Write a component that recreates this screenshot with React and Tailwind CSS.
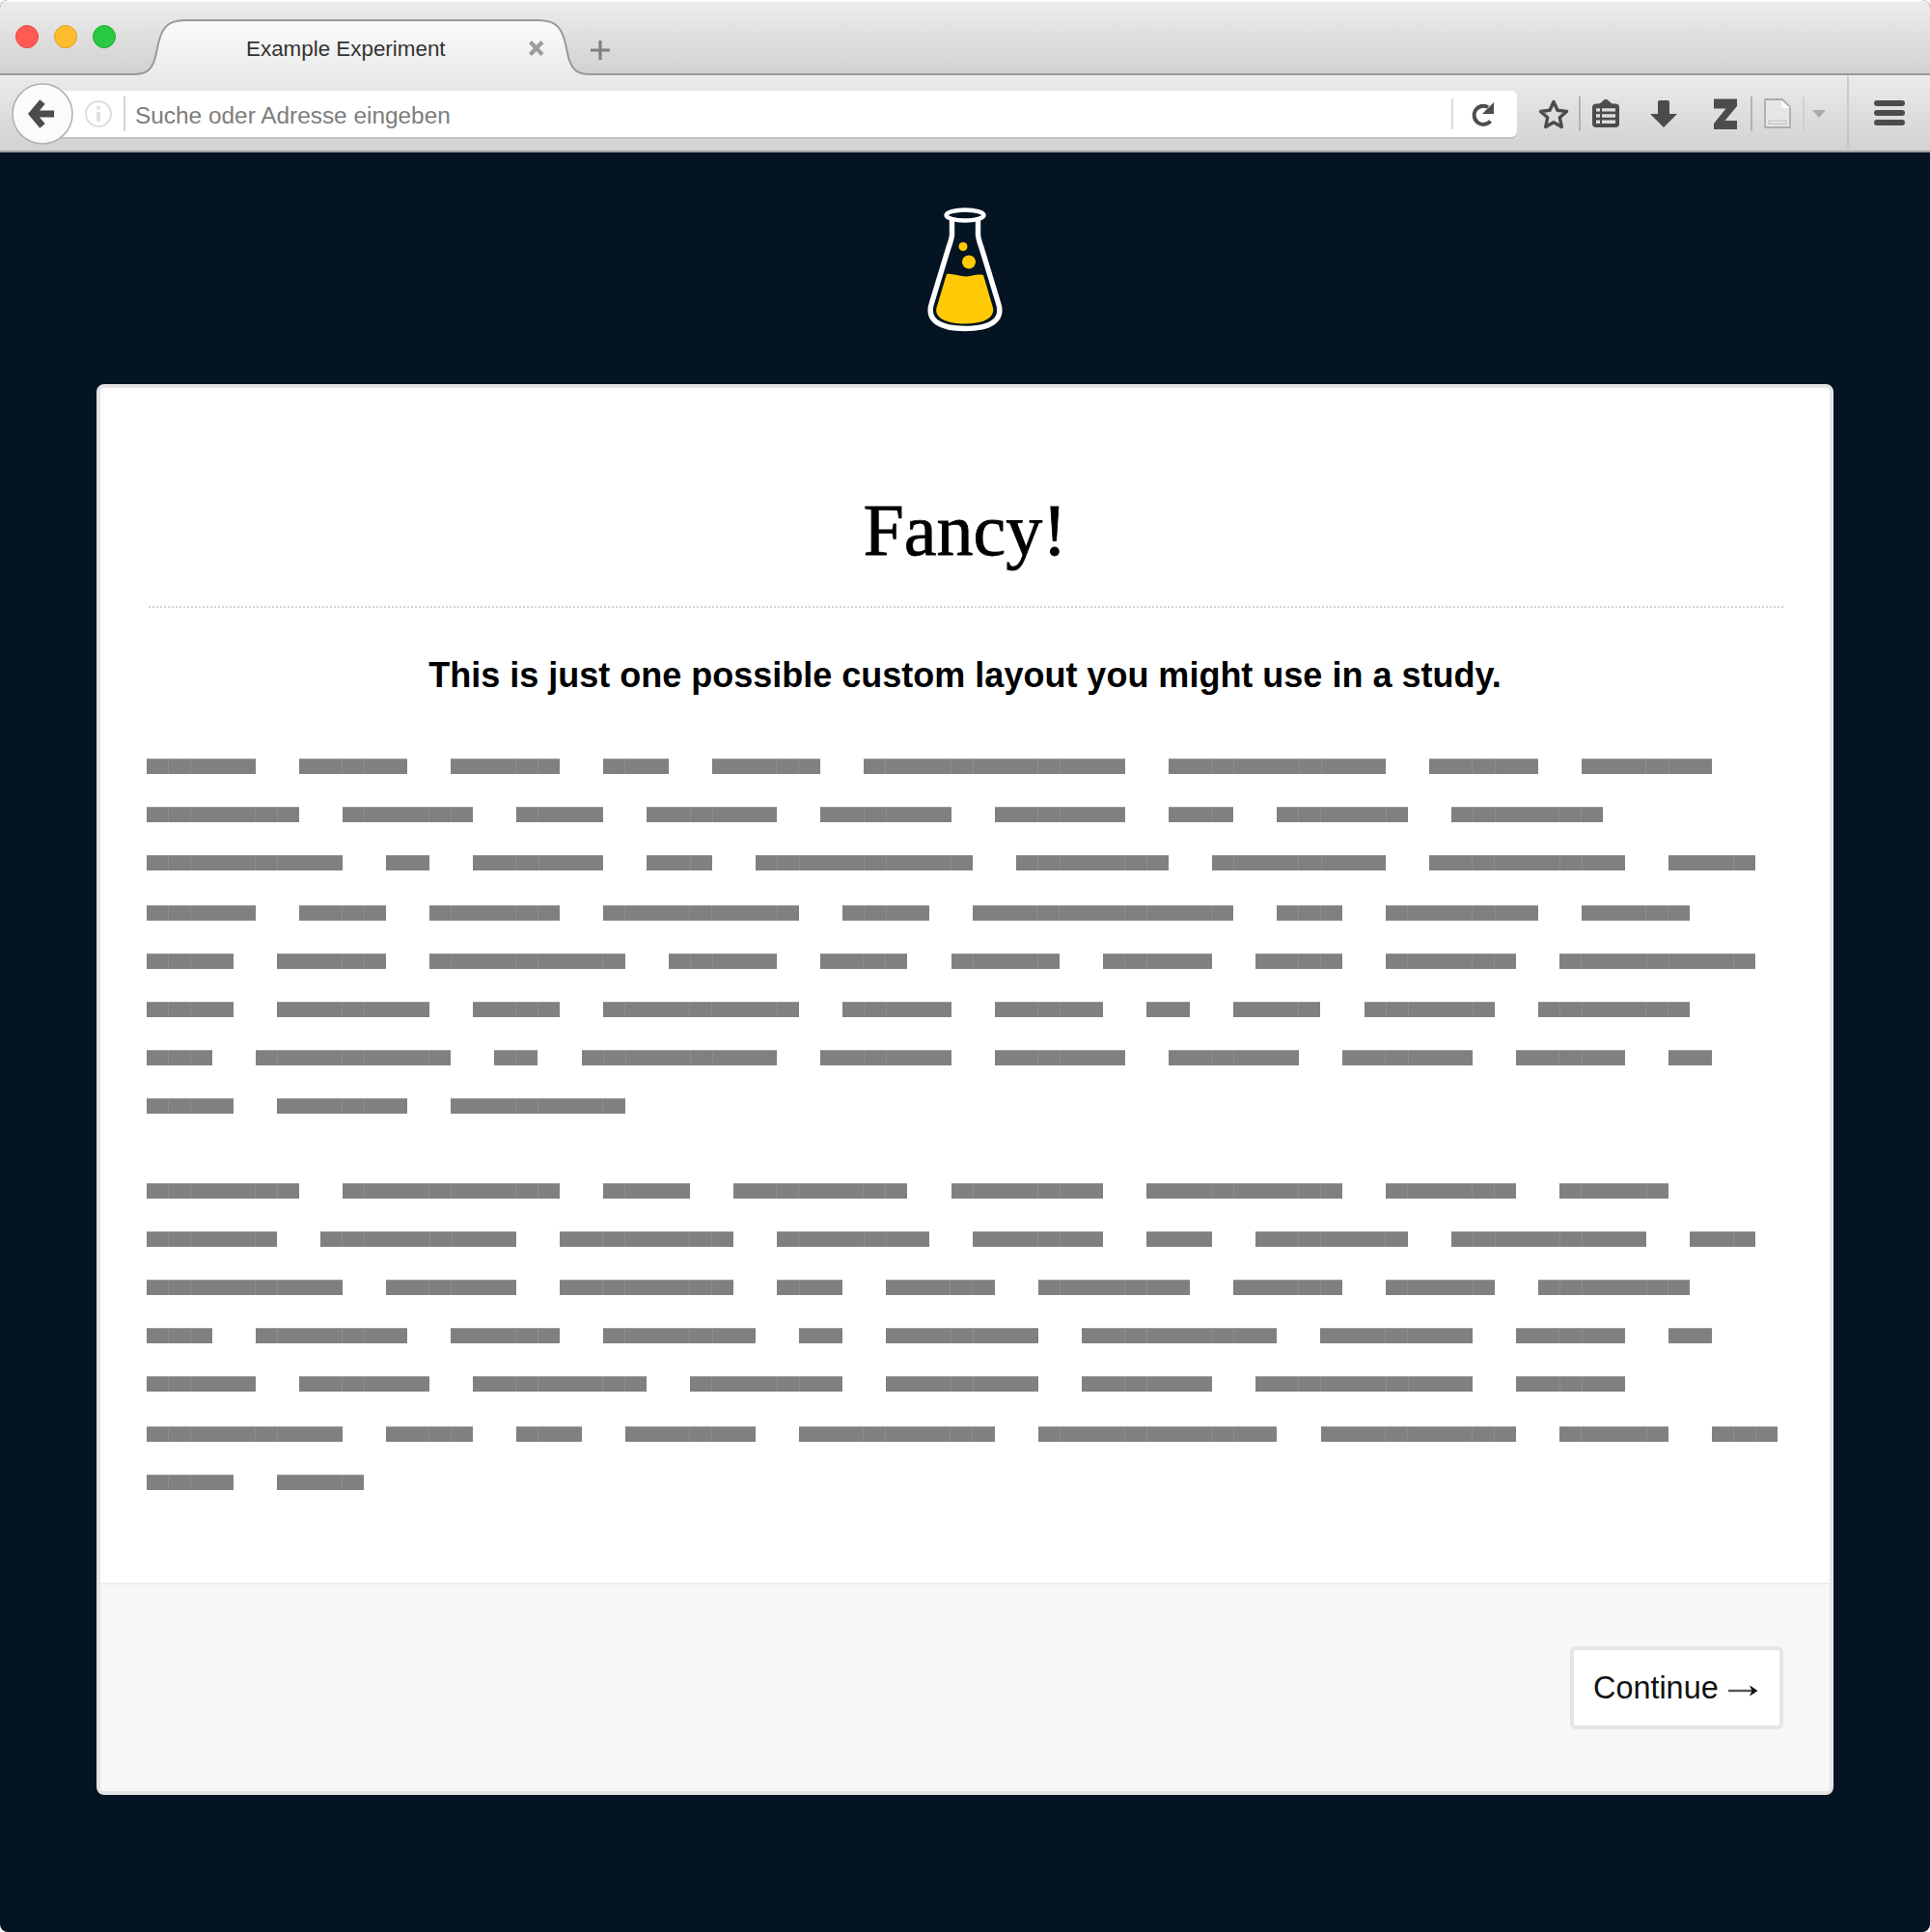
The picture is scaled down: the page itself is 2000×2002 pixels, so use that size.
import React from "react";

const UNIT = 22.53;

// Each number is a word length in characters; "gap" marks the line that sits 2px lower.
const PARAGRAPHS = [
  {
    gap: 3,
    lines: [
      [5, 5, 5, 3, 5, 12, 10, 5, 6],
      [7, 6, 4, 6, 6, 6, 3, 6, 7],
      [9, 2, 6, 3, 10, 7, 8, 9, 4],
      [5, 4, 6, 9, 4, 12, 3, 7, 5],
      [4, 5, 9, 5, 4, 5, 5, 4, 6, 9],
      [4, 7, 4, 9, 5, 5, 2, 4, 6, 7],
      [3, 9, 2, 9, 6, 6, 6, 6, 5, 2],
      [4, 6, 8],
    ],
  },
  {
    gap: 5,
    lines: [
      [7, 10, 4, 8, 7, 9, 6, 5],
      [6, 9, 8, 7, 6, 3, 7, 9, 3],
      [9, 6, 8, 3, 5, 7, 5, 5, 7],
      [3, 7, 5, 7, 2, 7, 9, 7, 5, 2],
      [5, 6, 8, 7, 7, 6, 10, 5],
      [9, 4, 3, 6, 9, 11, 9, 5, 3],
      [4, 4],
    ],
  },
];

function Line({ words, lowered }) {
  let k = 0;
  const items = words.map((n) => {
    const start = k;
    k += n + 2;
    return { n, start };
  });
  return (
    <div className={lowered ? "mt-0.5 flex h-[50px] items-center gap-[45.06px]" : "flex h-[50px] items-center gap-[45.06px]"}>
      {items.map(({ n, start }) => (
        <div
          key={start}
          className="flex h-4 shrink-0 border-t border-[#9b9b9b] bg-[#808080]"
          style={{ width: n * UNIT }}
        >
          {Array.from({ length: n }, (_, i) => (
            <span
              key={i}
              className={
                i > 0 && ((start + i) % 4 === 1 || (start + i) % 4 === 2)
                  ? "h-full flex-1 border-l border-[#8d8d8d]"
                  : "h-full flex-1"
              }
            />
          ))}
        </div>
      ))}
    </div>
  );
}

function TabStrip() {
  return (
    <div className="relative h-[78px] border-t-2 border-[#fafafa] bg-gradient-to-b from-[#ececec] to-[#d1d1d1]">
      <svg className="absolute -top-0.5 left-0 h-[80px] w-full" viewBox="0 0 2000 80" fill="none">
        <defs>
          <linearGradient id="tab" x1="0" y1="20" x2="0" y2="80" gradientUnits="userSpaceOnUse">
            <stop offset="0" stopColor="#fbfbfb" />
            <stop offset="1" stopColor="#ebebeb" />
          </linearGradient>
        </defs>
        <path
          d="M0 77H140C156 77 160 67 163 50C167 29 173 21 192 21H558C577 21 583 29 587 50C590 67 594 77 610 77H2000V80H0Z"
          fill="url(#tab)"
        />
        <path
          d="M0 77H140C156 77 160 67 163 50C167 29 173 21 192 21H558C577 21 583 29 587 50C590 67 594 77 610 77H2000"
          stroke="#999"
          strokeWidth="2"
        />
        <path d="M549.500 43.500L562 56.500M562 43.500L549.500 56.500" stroke="#9c9c9c" strokeWidth="4.200" />
        <path d="M622 42V62M612 52H632" stroke="#808080" strokeWidth="3.2" />
      </svg>
      <div className="relative flex h-full items-center">
        <div className="-mt-1 ml-4 flex gap-4">
          <span className="size-6 rounded-full border border-[#e2463f] bg-[#ff5b53]" />
          <span className="size-6 rounded-full border border-[#dfa023] bg-[#ffbd2e]" />
          <span className="size-6 rounded-full border border-[#1dab2c] bg-[#28ca41]" />
        </div>
        <span className="mt-[23px] ml-[135px] text-[22.4px] leading-none whitespace-nowrap text-[#333]">
          Example Experiment
        </span>
      </div>
    </div>
  );
}

function Toolbar() {
  return (
    <div className="relative flex h-[80px] border-b-2 border-[#a0a0a0] bg-gradient-to-b from-[#ebebeb] to-[#d2d2d2]">
      <div className="mt-4 ml-[50px] flex h-12 w-[1522px] items-center rounded-r-md bg-white shadow-[0_2px_0_#c3c3c3]">
        <span className="ml-[78px] h-9 w-0.5 bg-[#d4d4d4]" />
        <span className="mt-1 ml-[10px] text-[24.4px] leading-none whitespace-nowrap text-[#7d7d7d]">
          Suche oder Adresse eingeben
        </span>
        <span className="mr-[66px] ml-auto h-8 w-0.5 bg-[#d9d9d9]" />
      </div>
      <svg className="absolute top-0 left-0 h-[80px] w-full" viewBox="0 78 2000 80" fill="none">
        <circle cx="44" cy="118" r="31" fill="#fbfbfb" stroke="#b0b0b0" strokeWidth="1.6" />
        <path d="M44 105.500L33.500 118L44 130.500M34 118H56" stroke="#4c4c4c" strokeWidth="7" />
        <circle cx="102" cy="118" r="13" stroke="#dedede" strokeWidth="2" />
        <path d="M102 110V113.500M102 116V126" stroke="#dedede" strokeWidth="3.600" />
        <path d="M1544.500 125.500A9.600 9.600 0 1 1 1542 111" stroke="#4c4c4c" strokeWidth="4" />
        <path d="M1548 106V118H1536Z" fill="#4c4c4c" />
        <path
          d="M1610 105.500L1614 114.200L1623.500 115.500L1616.300 121.800L1618.300 131.500L1610 126.800L1601.700 131.500L1603.700 121.800L1596.500 115.500L1606 114.200Z"
          stroke="#4c4c4c"
          strokeWidth="3.400"
          strokeLinejoin="round"
        />
        <path d="M1637 100V136M1815 100V136" stroke="#b2b2b2" strokeWidth="2" />
        <rect x="1650" y="107.500" width="28" height="24.500" rx="4" fill="#4c4c4c" />
        <path d="M1656 108.500L1660 105.500Q1664 100 1668 105.500L1672 108.500Z" fill="#4c4c4c" />
        <path
          d="M1654 112.300H1658V115.500H1654ZM1660 112.300H1674V115.500H1660ZM1654 118.300H1658V121.800H1654ZM1660 118.300H1674V121.800H1660ZM1654 124.500H1658V128H1654ZM1660 124.500H1674V128H1660Z"
          fill="#dedede"
        />
        <path d="M1718 106Q1718 104 1720 104H1728Q1730 104 1730 106V118H1738L1724 132L1710 118H1718Z" fill="#4c4c4c" />
        <path d="M1776 102.500H1800V110L1787.500 125H1800V134H1776V128L1788.500 112.500H1776Z" fill="#4c4c4c" />
        <path d="M1829 103H1847L1855 111V132H1829Z" fill="#e6e6e6" stroke="#acacac" strokeWidth="1.800" strokeLinejoin="round" />
        <path d="M1846 104V112H1855Z" fill="#fafafa" />
        <rect x="1833" y="125" width="18" height="3.500" stroke="#bdbdbd" />
        <path d="M1869 100V136" stroke="#cbcbcb" strokeWidth="1.500" />
        <path d="M1878 114H1892L1885 122Z" fill="#aaa" />
        <path d="M1915 79V154" stroke="#c2c2c2" strokeWidth="1.500" />
        <path d="M1945 107H1971M1945 117H1971M1945 127H1971" stroke="#4c4c4c" strokeWidth="6" strokeLinecap="round" />
      </svg>
    </div>
  );
}

function Flask() {
  return (
    <svg className="mx-auto mt-[56px] block h-[130px] w-20" viewBox="960 214 80 130" fill="none">
      <ellipse cx="1000" cy="223" rx="19.500" ry="5.500" stroke="#fff" strokeWidth="4.400" />
      <path
        d="M986.500 227V243C986.500 247 984.500 252 982.500 258L965.500 314C959.500 332 974 340.500 1000 340.500C1026 340.500 1040.500 332 1034.500 314L1017.500 258C1015.500 252 1013.500 247 1013.500 243V227"
        stroke="#fff"
        strokeWidth="5.400"
      />
      <path
        d="M981 284C987 283 995 287 1002 286.500C1008 286 1013 283.500 1019 285L1029 319C1031 329 1020 335.500 1000 335.500C980 335.500 968 329 970.500 319Z"
        fill="#ffca05"
      />
      <circle cx="998" cy="255.500" r="4.500" fill="#ffca05" />
      <circle cx="1004" cy="271.500" r="7" fill="#ffca05" />
    </svg>
  );
}

export default function App() {
  return (
    <div className="h-[2002px] w-[2000px] overflow-hidden bg-white font-['Liberation_Sans',Arial,sans-serif]">
      <div className="flex h-full flex-col overflow-hidden rounded-[8px] bg-[#041423]">
        <TabStrip />
        <Toolbar />
        <Flask />
        <main className="mx-[100px] mt-[54px] flex h-[1462px] flex-col overflow-hidden rounded-[8px] border-4 border-[#e4e4e4] bg-white">
          <div className="h-[1238px] px-12">
            <h1 className="mt-[102px] text-center font-['Liberation_Serif',serif] text-[76px] leading-[90px] text-black [-webkit-text-stroke:0.8px_black]">
              Fancy!
            </h1>
            <div className="mt-[34px] ml-0.5 -mr-0.5 h-0.5 bg-[repeating-linear-gradient(90deg,#d4d4d4_0_2px,transparent_2px_4px)]" />
            <p className="mt-[50px] text-center text-[36px] leading-10 font-bold whitespace-nowrap text-black">
              This is just one possible custom layout you might use in a study.
            </p>
            <div className="mt-[49px] flex flex-col gap-[38px]">
              {PARAGRAPHS.map(({ lines, gap }, i) => (
                <div key={i}>
                  {lines.map((words, j) => (
                    <Line key={j} words={words} lowered={j === gap} />
                  ))}
                </div>
              ))}
            </div>
          </div>
          <footer className="flex flex-1 items-center justify-end border-t-2 border-[#ededed] bg-[#f7f7f7] pr-12">
            <button className="flex h-[86px] w-[221px] items-center rounded-[6px] border-4 border-[#e5e5e5] bg-white pl-[20px] text-[32.400px] whitespace-nowrap text-[#111]">
              Continue
              <svg className="mt-1.5 ml-[10px] h-3 w-8" viewBox="0 0 32 12" fill="none">
                <path d="M0 6H26" stroke="#555" strokeWidth="2.400" />
                <path d="M22 0.500C25 2 28 4.500 30.500 6C28 7.500 25 10 22 11.500L24.500 6Z" fill="#111" />
              </svg>
            </button>
          </footer>
        </main>
      </div>
    </div>
  );
}
